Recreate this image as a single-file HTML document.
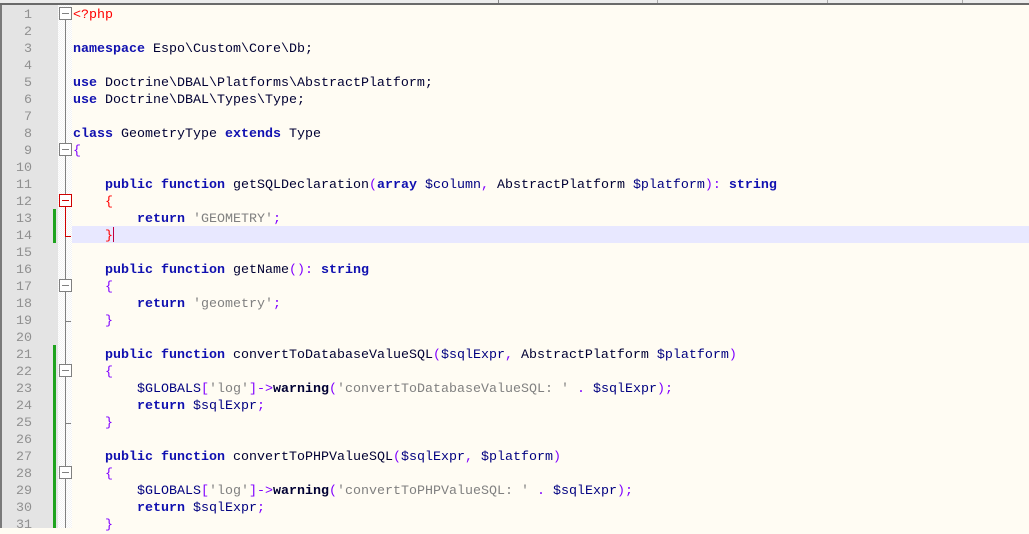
<!DOCTYPE html>
<html><head><meta charset="utf-8"><style>
html,body{margin:0;padding:0;}
body{width:1029px;height:528px;overflow:hidden;background:#fffcf3;position:relative;font-family:"Liberation Mono","Courier New",monospace;font-size:13.33px;}
.top{position:absolute;left:0;top:0;width:1029px;height:3px;background:#ececec;}
.topline{position:absolute;left:0;top:3px;width:1029px;height:2px;background:#6a6a6a;}
.lborder{position:absolute;left:0;top:5px;width:2px;height:523px;background:#7a7a7a;}
.ln{position:absolute;left:2px;top:5px;width:51px;height:523px;background:#e4e4e4;}
.chg{position:absolute;left:53px;top:5px;width:5px;height:523px;background:#e4e4e4;}
.fold{position:absolute;left:58px;top:5px;width:14px;height:523px;background:repeating-conic-gradient(#f3f3f3 0 25%,#ffffff 0 50%) 0 0/2px 2px;}
.num{position:absolute;left:2px;width:30px;text-align:right;color:#909090;height:17px;line-height:17px;margin-top:2px;}
.code{position:absolute;left:73px;height:17px;line-height:17px;white-space:pre;color:#000033;margin-top:2px;}
.hl{position:absolute;left:72px;top:226px;width:957px;height:17px;background:#e8e8ff;}
.k{color:#1010b0;font-weight:bold;}
.v{color:#000080;}
.o{color:#8000ff;}
.s{color:#808080;}
.r{color:#ff0000;}
.b{font-weight:bold;color:#000033;}
.g{position:absolute;left:53px;width:3px;background:#1ea31e;}
.vl{position:absolute;left:65px;width:1px;background:#808080;}
.box{position:absolute;left:59px;width:13px;height:13px;border:1px solid #808080;box-sizing:border-box;background:#fff;}
.box::after{content:"";position:absolute;left:2px;top:5px;width:7px;height:1px;background:#808080;}
.box.red{border-color:#d00000;}
.box.red::after{background:#d00000;}
.tick{position:absolute;left:65px;width:6px;height:1px;background:#808080;}
</style></head><body>
<div class="top"></div>
<div style="position:absolute;left:498px;top:0;width:1px;height:3px;background:#888"></div>
<div style="position:absolute;left:657px;top:0;width:1px;height:3px;background:#aaa"></div>
<div style="position:absolute;left:827px;top:0;width:1px;height:3px;background:#aaa"></div>
<div style="position:absolute;left:962px;top:0;width:1px;height:3px;background:#aaa"></div>
<div class="topline"></div>
<div class="ln"></div><div class="chg"></div><div class="fold"></div>
<div class="lborder"></div>
<div class="hl"></div>

<div class="vl" style="top:20px;height:508px"></div>
<div class="vl" style="top:205px;height:32px;background:#d00000"></div>
<div class="tick" style="top:236px;background:#d00000"></div>
<div class="tick" style="top:321px"></div>
<div class="tick" style="top:423px"></div>
<div class="box" style="top:7px"></div>
<div class="box" style="top:143px"></div>
<div class="box red" style="top:194px"></div>
<div class="box" style="top:279px"></div>
<div class="box" style="top:364px"></div>
<div class="box" style="top:466px"></div>

<div class="g" style="top:209px;height:34px"></div>
<div class="g" style="top:345px;height:183px"></div>

<div class="num" style="top:5px">1</div>
<div class="num" style="top:22px">2</div>
<div class="num" style="top:39px">3</div>
<div class="num" style="top:56px">4</div>
<div class="num" style="top:73px">5</div>
<div class="num" style="top:90px">6</div>
<div class="num" style="top:107px">7</div>
<div class="num" style="top:124px">8</div>
<div class="num" style="top:141px">9</div>
<div class="num" style="top:158px">10</div>
<div class="num" style="top:175px">11</div>
<div class="num" style="top:192px">12</div>
<div class="num" style="top:209px">13</div>
<div class="num" style="top:226px">14</div>
<div class="num" style="top:243px">15</div>
<div class="num" style="top:260px">16</div>
<div class="num" style="top:277px">17</div>
<div class="num" style="top:294px">18</div>
<div class="num" style="top:311px">19</div>
<div class="num" style="top:328px">20</div>
<div class="num" style="top:345px">21</div>
<div class="num" style="top:362px">22</div>
<div class="num" style="top:379px">23</div>
<div class="num" style="top:396px">24</div>
<div class="num" style="top:413px">25</div>
<div class="num" style="top:430px">26</div>
<div class="num" style="top:447px">27</div>
<div class="num" style="top:464px">28</div>
<div class="num" style="top:481px">29</div>
<div class="num" style="top:498px">30</div>
<div class="num" style="top:515px">31</div>

<div class="code" style="top:5px"><span class="r">&lt;?php</span></div>
<div class="code" style="top:39px"><span class="k">namespace</span> Espo\Custom\Core\Db;</div>
<div class="code" style="top:73px"><span class="k">use</span> Doctrine\DBAL\Platforms\AbstractPlatform;</div>
<div class="code" style="top:90px"><span class="k">use</span> Doctrine\DBAL\Types\Type;</div>
<div class="code" style="top:124px"><span class="k">class</span> GeometryType <span class="k">extends</span> Type</div>
<div class="code" style="top:141px"><span class="o">{</span></div>
<div class="code" style="top:175px">    <span class="k">public</span> <span class="k">function</span> getSQLDeclaration<span class="o">(</span><span class="k">array</span> <span class="v">$column</span><span class="o">,</span> AbstractPlatform <span class="v">$platform</span><span class="o">):</span> <span class="k">string</span></div>
<div class="code" style="top:192px">    <span class="r">{</span></div>
<div class="code" style="top:209px">        <span class="k">return</span> <span class="s">'GEOMETRY'</span><span class="o">;</span></div>
<div class="code" style="top:226px">    <span class="r">}</span></div>
<div style="position:absolute;left:113px;top:227px;width:1px;height:15px;background:#c00040"></div>
<div class="code" style="top:260px">    <span class="k">public</span> <span class="k">function</span> getName<span class="o">():</span> <span class="k">string</span></div>
<div class="code" style="top:277px">    <span class="o">{</span></div>
<div class="code" style="top:294px">        <span class="k">return</span> <span class="s">'geometry'</span><span class="o">;</span></div>
<div class="code" style="top:311px">    <span class="o">}</span></div>
<div class="code" style="top:345px">    <span class="k">public</span> <span class="k">function</span> convertToDatabaseValueSQL<span class="o">(</span><span class="v">$sqlExpr</span><span class="o">,</span> AbstractPlatform <span class="v">$platform</span><span class="o">)</span></div>
<div class="code" style="top:362px">    <span class="o">{</span></div>
<div class="code" style="top:379px">        <span class="v">$GLOBALS</span><span class="o">[</span><span class="s">'log'</span><span class="o">]-&gt;</span><span class="b">warning</span><span class="o">(</span><span class="s">'convertToDatabaseValueSQL: '</span> <span class="o">.</span> <span class="v">$sqlExpr</span><span class="o">);</span></div>
<div class="code" style="top:396px">        <span class="k">return</span> <span class="v">$sqlExpr</span><span class="o">;</span></div>
<div class="code" style="top:413px">    <span class="o">}</span></div>
<div class="code" style="top:447px">    <span class="k">public</span> <span class="k">function</span> convertToPHPValueSQL<span class="o">(</span><span class="v">$sqlExpr</span><span class="o">,</span> <span class="v">$platform</span><span class="o">)</span></div>
<div class="code" style="top:464px">    <span class="o">{</span></div>
<div class="code" style="top:481px">        <span class="v">$GLOBALS</span><span class="o">[</span><span class="s">'log'</span><span class="o">]-&gt;</span><span class="b">warning</span><span class="o">(</span><span class="s">'convertToPHPValueSQL: '</span> <span class="o">.</span> <span class="v">$sqlExpr</span><span class="o">);</span></div>
<div class="code" style="top:498px">        <span class="k">return</span> <span class="v">$sqlExpr</span><span class="o">;</span></div>
<div class="code" style="top:515px">    <span class="o">}</span></div>
</body></html>
